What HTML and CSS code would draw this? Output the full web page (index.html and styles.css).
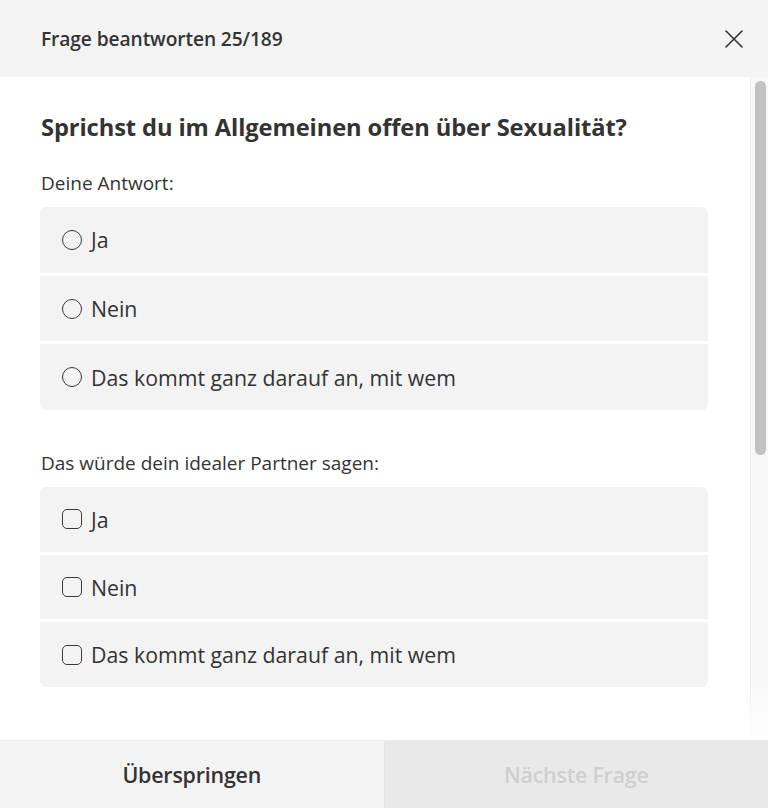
FILE: index.html
```html
<!DOCTYPE html>
<html lang="de">
<head>
<meta charset="utf-8">
<title>Frage beantworten</title>
<link rel="stylesheet" href="styles.css">
</head>
<body>
<div class="dialog">
  <header class="dialog-header">
    <h1 class="dialog-title">Frage beantworten 25/189</h1>
    <button class="close-btn" aria-label="Schließen">
      <svg width="20" height="20" viewBox="0 0 20 20"><path d="M2 2 L18 18 M18 2 L2 18" stroke="#333" stroke-width="1.6" fill="none" stroke-linecap="round"/></svg>
    </button>
  </header>
  <div class="dialog-main">
    <main class="dialog-body">
      <h2 class="question">Sprichst du im Allgemeinen offen über Sexualität?</h2>

      <p class="label">Deine Antwort:</p>
      <div class="options">
        <label class="option"><span class="radio"></span><span>Ja</span></label>
        <label class="option"><span class="radio"></span><span>Nein</span></label>
        <label class="option"><span class="radio"></span><span>Das kommt ganz darauf an, mit wem</span></label>
      </div>

      <p class="label label-second">Das würde dein idealer Partner sagen:</p>
      <div class="options options-tight">
        <label class="option"><span class="check"></span><span>Ja</span></label>
        <label class="option"><span class="check"></span><span>Nein</span></label>
        <label class="option"><span class="check"></span><span>Das kommt ganz darauf an, mit wem</span></label>
      </div>
    </main>
    <div class="scrollbar"><div class="scroll-thumb"></div></div>
    <div class="fade"></div>
  </div>
  <footer class="dialog-footer">
    <button class="footer-btn skip">Überspringen</button>
    <button class="footer-btn next" disabled>Nächste Frage</button>
  </footer>
</div>
</body>
</html>
```
FILE: styles.css
```css
* { box-sizing: border-box; }
html, body { margin: 0; padding: 0; }
body {
  font-family: "Open Sans", "Noto Sans", sans-serif;
  color: #333;
  background: #fff;
}
.dialog {
  display: flex;
  flex-direction: column;
  height: 808px;
  width: 768px;
}
.dialog-header {
  flex: 0 0 77px;
  background: #f3f3f3;
  display: flex;
  align-items: center;
  justify-content: space-between;
  padding: 0 24px 0 41px;
}
.dialog-title {
  margin: 0;
  font-size: 19.2px;
  font-weight: 600;
  color: #333;
  letter-spacing: -0.1px;
}
.close-btn {
  border: 0;
  background: none;
  padding: 0;
  width: 20px;
  height: 20px;
  display: flex;
  cursor: pointer;
}
.dialog-main {
  flex: 1;
  display: flex;
  position: relative;
  overflow: hidden;
}
.dialog-body {
  flex: 1;
  padding: 35px 42px 0 40px;
}
.scrollbar {
  flex: 0 0 18px;
  background: #f8f8f8;
  border-left: 1px solid #ececec;
  padding: 4px 2px 0 4px;
}
.scroll-thumb {
  height: 374px;
  background: #c1c1c1;
  border-radius: 6px;
}
.fade {
  position: absolute;
  left: 0;
  right: 0;
  bottom: 0;
  height: 60px;
  background: linear-gradient(rgba(255,255,255,0), rgba(255,255,255,0.9));
  pointer-events: none;
}
.question {
  margin: 0 0 30px 1px;
  font-size: 23.7px;
  line-height: 30px;
  font-weight: 700;
  color: #333;
  letter-spacing: -0.1px;
}
.label {
  margin: 0 0 13px 1px;
  font-size: 19px;
  line-height: 22px;
  color: #333;
}
.label-second { margin-top: 42px; }
.options {
  display: flex;
  flex-direction: column;
  gap: 3px;
}
.option {
  display: flex;
  align-items: center;
  gap: 9px;
  height: 65.7px;
  padding-left: 22px;
  background: #f3f3f3;
  font-size: 21.3px;
  color: #333;
}
.options-tight .option { height: 64.7px; }
.option:first-child { border-radius: 6px 6px 0 0; }
.option:last-child { border-radius: 0 0 6px 6px; }
.radio {
  width: 20px;
  height: 20px;
  border: 1.5px solid #3a3a3a;
  border-radius: 50%;
  flex: 0 0 auto;
}
.check {
  width: 20px;
  height: 20px;
  border: 1.5px solid #3a3a3a;
  border-radius: 5px;
  flex: 0 0 auto;
}
.dialog-footer {
  flex: 0 0 68px;
  display: flex;
  border-top: 1px solid #ececec;
}
.footer-btn {
  flex: 1;
  border: 0;
  font-family: inherit;
  font-size: 21.4px;
  font-weight: 600;
  letter-spacing: -0.2px;
}
.skip {
  background: #f3f3f3;
  color: #333;
  border-right: 1px solid #e4e4e4;
}
.next {
  background: #e9e9e9;
  color: #cfcfcf;
}
```
